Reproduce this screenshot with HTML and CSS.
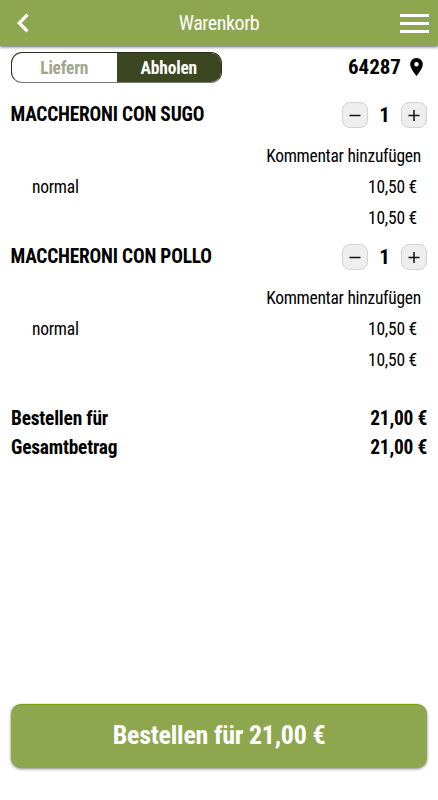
FILE: index.html
```html
<!DOCTYPE html>
<html lang="de">
<head>
<meta charset="utf-8">
<title>Warenkorb</title>
<link rel="stylesheet" href="styles.css">
</head>
<body>
<header class="bar">
  <svg class="back" viewBox="0 0 24 24"><path d="M16.500 3.700 8.200 12 16.500 20.300" fill="none" stroke="#fff" stroke-width="3.200"/></svg>
  <h1>Warenkorb</h1>
  <svg class="menu" viewBox="0 0 29 19"><path d="M0 1.500H29M0 9.500H29M0 17.500H29" stroke="#fff" stroke-width="3"/></svg>
</header>
<main>
  <div class="mode">
    <div class="toggle"><span class="opt">Liefern</span><span class="opt on">Abholen</span></div>
    <div class="zip"><span>64287</span><svg class="pin" viewBox="5 2 14 20"><path d="M12 2C8.130 2 5 5.130 5 9c0 5.250 7 13 7 13s7-7.750 7-13c0-3.870-3.130-7-7-7zm0 9.500a2.500 2.500 0 1 1 0-5 2.500 2.500 0 0 1 0 5z"/></svg></div>
  </div>
  <section class="item">
    <div class="head"><h2>MACCHERONI CON SUGO</h2><button class="step"><svg viewBox="0 0 24 24"><path d="M6.500 12.500H17.500"/></svg></button><b class="qty">1</b><button class="step"><svg viewBox="0 0 24 24"><path d="M6.500 12.500H17.500M12 7V18"/></svg></button></div>
    <div class="note">Kommentar hinzufügen</div>
    <div class="line"><span>normal</span><span>10,50 €</span></div>
    <div class="line sum"><span>10,50 €</span></div>
  </section>
  <section class="item">
    <div class="head"><h2>MACCHERONI CON POLLO</h2><button class="step"><svg viewBox="0 0 24 24"><path d="M6.500 12.500H17.500"/></svg></button><b class="qty">1</b><button class="step"><svg viewBox="0 0 24 24"><path d="M6.500 12.500H17.500M12 7V18"/></svg></button></div>
    <div class="note">Kommentar hinzufügen</div>
    <div class="line"><span>normal</span><span>10,50 €</span></div>
    <div class="line sum"><span>10,50 €</span></div>
  </section>
  <div class="totals">
    <div class="total"><span>Bestellen für</span><span>21,00 €</span></div>
    <div class="total"><span>Gesamtbetrag</span><span>21,00 €</span></div>
  </div>
</main>
<button class="order">Bestellen für 21,00 €</button>
</body>
</html>
```
FILE: styles.css
```css
*{box-sizing:border-box}
body{margin:0;height:800px;display:flex;flex-direction:column;background:#fff;color:#000;font-family:"Roboto Condensed",Roboto,sans-serif;font-stretch:75%;overflow:hidden}
.bar{height:46px;display:flex;align-items:center;justify-content:space-between;padding:0 9px 0 11px;background:#8ea64e;box-shadow:0 1px 3px rgba(0,0,0,.6);color:#fff}
.back{width:24px;height:24px}
.menu{width:29px;height:19px}
h1{margin:0 0 0 3px;font-size:20px;font-weight:400;letter-spacing:-.45px}
main{flex:1;padding:6px 11px 0}
.mode{height:31px;display:flex;justify-content:space-between;align-items:center}
.toggle{display:flex;width:211px;height:31px;border:1px solid #24301a;border-bottom-color:#777;border-radius:11px;overflow:hidden}
.opt{flex:1;display:flex;align-items:center;justify-content:center;font-size:17.5px;font-weight:700;letter-spacing:-.2px;color:#a1a68d}
.on{background:#3b4720;color:#fff}
.zip{display:flex;align-items:center;gap:9px;font-size:21px;font-weight:700;padding-right:4px;line-height:29px}
.pin{width:13px;height:18px;margin-bottom:1px}
.item{height:142px;padding-top:19px}
.head{height:26px;display:flex;align-items:center}
h2{margin:0 0 2px -.5px;flex:1;font-size:19.4px;font-weight:700;letter-spacing:-.2px}
.step{width:26px;height:26px;padding:0;border:1px solid #d2d2d2;border-radius:8px;background:#eee}
.step svg{display:block;width:24px;height:24px;stroke:#111;stroke-width:1.500}
.qty{width:33px;text-align:center;font-size:21px}
.note{height:30px;margin-top:13px;padding-right:6px;text-align:right;font-size:17.5px;letter-spacing:-.28px;line-height:30px}
.line{height:31px;display:flex;justify-content:space-between;align-items:center;padding:0 10px 0 21px;font-size:17.5px;letter-spacing:-.25px}
.sum{justify-content:flex-end}
.totals{padding-top:37px}
.total{height:29px;display:flex;justify-content:space-between;align-items:center;font-size:19.4px;font-weight:700;letter-spacing:-.2px}
.order{height:64px;margin:0 11px 32px;padding:0 0 3px;border:0;border-top:1px solid #7f9f12;border-radius:10px;background:#8ea64e;box-shadow:0 1px 3px rgba(0,0,0,.5);color:#fff;font-family:inherit;font-stretch:75%;font-size:26px;font-weight:700;letter-spacing:-.23px}
```
